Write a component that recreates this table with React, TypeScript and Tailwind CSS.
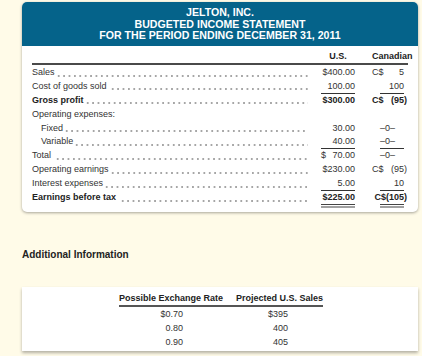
type Row = {
  label: string;
  indent?: boolean;
  bold?: boolean;
  us?: React.ReactNode;
  ca?: React.ReactNode;
  usLine?: "single" | "double";
  caLine?: "single" | "double";
  noDots?: boolean;
};

function Paren({ children }: { children: React.ReactNode }) {
  // closing paren hangs past the digit column
  return (
    <span>
      {children}
      <span className="-mr-[3px]">)</span>
    </span>
  );
}

const rows: Row[] = [
  { label: "Sales", us: "$400.00", ca: <><span>C$</span><span>5</span></> },
  { label: "Cost of goods sold ", us: "100.00", ca: <><span /><span>100</span></>, usLine: "single", caLine: "single" },
  { label: "Gross profit", bold: true, us: "$300.00", ca: <><span>C$</span><Paren>(95</Paren></> },
  { label: "Operating expenses:", noDots: true },
  { label: "Fixed", indent: true, us: "30.00", ca: <><span /><span className="pr-[9px]">–0–</span></> },
  { label: "Variable", indent: true, us: "40.00", ca: <><span /><span className="pr-[9px]">–0–</span></>, usLine: "single", caLine: "single" },
  { label: "Total ", us: <><span>$</span><span>70.00</span></>, ca: <><span /><span className="pr-[9px]">–0–</span></> },
  { label: "Operating earnings", us: "$230.00", ca: <><span>C$</span><Paren>(95</Paren></> },
  { label: "Interest expenses", us: "5.00", ca: <><span /><span>10</span></>, usLine: "single", caLine: "single" },
  { label: "Earnings before tax ", bold: true, us: "$225.00", ca: <><span /><Paren>C$(105</Paren></>, usLine: "double", caLine: "double" },
];

function Lines({ kind, ca }: { kind?: "single" | "double"; ca?: boolean }) {
  if (!kind) return null;
  const w = ca ? "w-[24px] ml-auto" : "w-full";
  if (kind === "single") return <div className={`${w} h-[1px] bg-[#333]`} />;
  return (
    <div className={`${w} flex flex-col gap-[1px]`}>
      <div className="h-[1px] bg-[#444]" />
      <div className="h-[2px] bg-[#a0a0a0]" />
    </div>
  );
}

function Cell({ value, line, ca }: { value?: React.ReactNode; line?: "single" | "double"; ca?: boolean }) {
  const isText = typeof value === "string";
  return (
    <div className={`${ca ? "w-[32px]" : "w-[34px]"} h-[13.9px] flex flex-col`}>
      <div className={`h-[12.9px] leading-[13.9px] flex ${isText ? "justify-end" : "justify-between"} whitespace-nowrap`}>
        {value}
      </div>
      <Lines kind={line} ca={ca} />
    </div>
  );
}

export default function App() {
  return (
    <div
      className="w-[422px] h-[356px] overflow-hidden bg-[#fffbe8] pt-[2px] pl-[22px] pr-[4px] text-[#333]"
      style={{ fontFamily: '"Liberation Sans", Arial, sans-serif' }}
    >
      {/* statement card */}
      <div className="w-[396px] rounded-[5px] bg-white overflow-hidden shadow-[0_1px_3px_rgba(0,0,0,0.35)]">
        <div className="h-[44px] bg-[#05638a] pt-[5px] text-center text-white font-bold text-[10.6px] leading-[11.5px]">
          <div>JELTON, INC.</div>
          <div>BUDGETED INCOME STATEMENT</div>
          <div>FOR THE PERIOD ENDING DECEMBER 31, 2011</div>
        </div>

        <div className="px-[10px] pb-[7px] text-[9px]">
          <div className="flex items-center h-[13px] mt-[4px] font-bold text-[#222]">
            <div className="flex-1" />
            <div className="w-[34px] text-center">U.S.</div>
            <div className="w-[17px]" />
            <div className="w-[36px] text-right pr-[1px]">Canadian</div>
          </div>
          <div className="h-[2px] bg-[#4a4a4a] mb-[1px]" />

          {rows.map((r) => (
            <div key={r.label} className={`flex h-[13.9px] ${r.bold ? "font-bold text-[#222]" : ""}`}>
              <div className={`flex-1 flex min-w-0 leading-[13.9px] ${r.indent ? "pl-[9px]" : ""}`}>
                <span className="whitespace-pre shrink-0">{r.label}</span>
                {!r.noDots && (
                  // dot leaders
                  <span className="flex-1 h-[2px] mt-[8.5px] ml-[1px] bg-[radial-gradient(circle,#8a8a8a_0.6px,transparent_0.9px)] bg-[length:5.4px_2px] bg-repeat-x" />
                )}
              </div>
              <div className="w-[13px]" />
              {r.noDots ? (
                <div className="w-[83px]" />
              ) : (
                <>
                  <Cell value={r.us} line={r.usLine} />
                  <div className="w-[17px]" />
                  <Cell value={r.ca} line={r.caLine} ca />
                  <div className="w-[4px]" />
                </>
              )}
            </div>
          ))}
        </div>
      </div>

      <div className="mt-[37px] text-[10px] leading-[12px] font-bold text-[#222]">Additional Information</div>

      {/* exchange rate table */}
      <div className="mt-[26px] w-[396px] h-[64px] bg-white pt-[5px] shadow-[0_2px_3px_rgba(0,0,0,0.3)] text-[9px]">
        <div className="ml-[97px] w-[204px]">
          <div className="flex leading-[12px] font-bold text-[#222] whitespace-nowrap">
            <div className="w-[117px]">Possible Exchange Rate</div>
            <div>Projected U.S. Sales</div>
          </div>
          <div className="mt-[1px] h-[2px] bg-[#555]" />
          <div className="mt-[1px]">
            {[
              ["$0.70", "$395"],
              ["0.80", "400"],
              ["0.90", "405"],
            ].map(([rate, sales]) => (
              <div key={rate} className="flex h-[13.8px] leading-[13.8px]">
                <div className="w-[64px] text-right">{rate}</div>
                <div className="w-[105px] text-right">{sales}</div>
              </div>
            ))}
          </div>
        </div>
      </div>
    </div>
  );
}
